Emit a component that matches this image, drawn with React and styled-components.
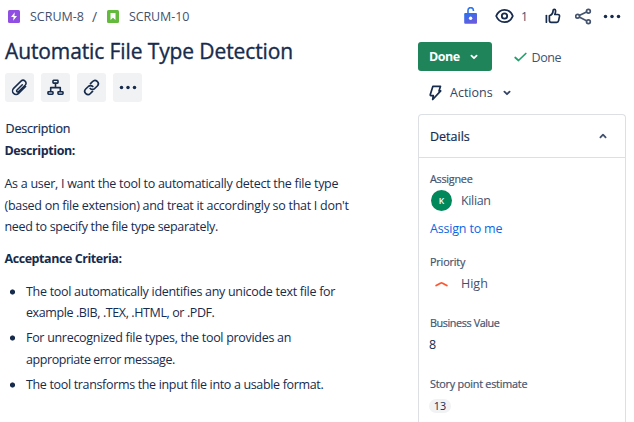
import React from 'react';
import styled, { createGlobalStyle } from 'styled-components';

const navy = '#172b4d';
const slate = '#42526e';

const GlobalStyle = createGlobalStyle`
  body {
    margin: 0;
    background: #fff;
    color: ${navy};
    font-family: "Open Sans", "Noto Sans", sans-serif;
    font-size: 12.5px;
    overflow: hidden;
  }
  svg { display: block; flex: none; }
`;

const Page = styled.div`
  display: grid;
  grid-template-columns: 418px 208px;
  width: 634px;
  height: 422px;
  overflow: hidden;
`;

const Main = styled.main`
  padding-left: 5px;
`;

const Side = styled.aside`
  display: flex;
  flex-direction: column;
`;

const Text = styled.span`
  white-space: nowrap;
  letter-spacing: ${(p) => p.$track || 0}px;
`;

const Breadcrumbs = styled.nav`
  display: flex;
  align-items: center;
  height: 32px;
  padding-left: 3px;
  color: ${slate};
  svg + ${Text} { margin-left: 10px; }
`;

const Slash = styled.span`
  width: 23px;
  padding-left: 8px;
  box-sizing: border-box;
  font-size: 14px;
`;

const Title = styled.h1`
  margin: 0;
  height: 41px;
  line-height: 39px;
  font-size: 21px;
  font-weight: 400;
  -webkit-text-stroke: 0.35px ${navy};
`;

const Toolbar = styled.div`
  display: flex;
  gap: 7px;
`;

const ToolButton = styled.button`
  display: flex;
  align-items: center;
  justify-content: center;
  width: 29px;
  height: 29px;
  padding: 0;
  border: 0;
  border-radius: 3px;
  background: #f1f2f4;
  color: ${navy};
`;

const FieldHeading = styled.h2`
  margin: 16px 0 0 0.5px;
  font-size: 12.5px;
  font-weight: 400;
  line-height: 22px;
  -webkit-text-stroke: 0.2px ${navy};
`;

const Strong = styled.h3`
  margin: 0 0 0 -0.5px;
  font-size: 12.5px;
  font-weight: 700;
  line-height: 22px;
`;

const Paragraph = styled.p`
  display: flex;
  flex-direction: column;
  margin: 11px 0 10px -0.5px;
  line-height: 21.5px;
`;

const List = styled.ul`
  display: flex;
  flex-direction: column;
  gap: 3.6px;
  margin: 11px 0 0;
  padding: 0;
  list-style: none;
  line-height: 21.6px;
`;

const Item = styled.li`
  display: flex;
  flex-direction: column;
  padding-left: 21px;
  background: radial-gradient(circle at 7.5px 11px, ${navy} 2.2px, transparent 2.9px);
`;

const TopActions = styled.div`
  display: flex;
  align-items: center;
  height: 32px;
  padding-left: 46px;
`;

const WatchCount = styled.span`
  width: 31px;
  padding-left: 7px;
  box-sizing: border-box;
  font-size: 12px;
  color: ${slate};
`;

const Gap = styled.span`
  width: ${(p) => p.$w}px;
  flex: none;
`;

const StatusRow = styled.div`
  display: flex;
  align-items: center;
  margin-top: 10px;
  height: 29px;
`;

const StatusButton = styled.button`
  display: flex;
  align-items: center;
  justify-content: space-between;
  width: 74px;
  height: 29px;
  padding: 0 14px 0 11px;
  border: 0;
  border-radius: 3px;
  background: #1f845a;
  color: #fff;
  font: 700 12.5px "Open Sans", sans-serif;
`;

const Resolution = styled.div`
  display: flex;
  align-items: center;
  gap: 4.5px;
  margin: 1px 0 0 22px;
  color: ${slate};
`;

const ActionsRow = styled.div`
  display: flex;
  align-items: center;
  height: 43px;
  padding-left: 11px;
  color: #344563;
`;

const Panel = styled.section`
  flex: 1;
  box-sizing: border-box;
  border: 1px solid #dcdfe4;
  border-bottom: 0;
  border-radius: 4px 4px 0 0;
`;

const PanelHeader = styled.header`
  display: flex;
  align-items: center;
  justify-content: space-between;
  height: 42px;
  padding: 0 18px 0 11px;
  border-bottom: 1px solid #dcdfe4;
  color: ${slate};

  ${Text} {
    color: ${navy};
    -webkit-text-stroke: 0.2px ${navy};
  }
`;

const Fields = styled.div`
  padding: 11px 0 0 11px;
`;

const Field = styled.div`
  height: ${(p) => p.$h}px;
`;

const Label = styled.div`
  height: 20px;
  line-height: 20px;
  font-size: 10.8px;
  color: #44546f;
  -webkit-text-stroke: 0.2px #44546f;
`;

const Value = styled.div`
  display: flex;
  align-items: center;
  height: 23px;
  color: ${slate};
`;

const PlainNumber = styled.span`
  margin-left: -1px;
  color: ${navy};
`;

const Avatar = styled.span`
  display: flex;
  align-items: center;
  justify-content: center;
  width: 21px;
  height: 21px;
  margin: 0 9px 0 1px;
  border-radius: 50%;
  background: #00875a;
  color: #fff;
  font-size: 8.5px;
  font-weight: 600;
`;

const Link = styled.a`
  display: block;
  height: 32px;
  line-height: 33px;
  color: #0c66e4;
`;

const Pill = styled.span`
  margin: 1px 0 0 -1px;
  width: 22px;
  height: 14px;
  line-height: 14px;
  border-radius: 7px;
  background: #f1f2f4;
  text-align: center;
  font-size: 10.8px;
  color: ${navy};
`;

const line = { fill: 'none', stroke: 'currentColor', strokeLinecap: 'round', strokeLinejoin: 'round' };

const EpicIcon = () => (
  <svg width="12" height="13" viewBox="0 0 12 13">
    <rect width="12" height="13" rx="1.5" fill="#904ee2" />
    <path d="M6.8 2.3 3 7h2.6l-.5 3.7L9 6H6.4z" fill="#fff" />
  </svg>
);
const StoryIcon = () => (
  <svg width="12" height="13" viewBox="0 0 12 13">
    <rect width="12" height="13" rx="1.5" fill="#63ba3c" />
    <path d="M3.5 3h5v7L6 7.7 3.5 10z" fill="#fff" />
  </svg>
);
const ClipIcon = () => (
  <svg width="17" height="17" viewBox="0 0 17 17" {...line} strokeWidth="1.5">
    <path d="m11.3 5.8-5.3 5.2a1.1 1.1 0 0 0 1.6 1.6l6.5-6.4A2.9 2.9 0 0 0 10 2.1L2.6 9.4a3.5 3.5 0 0 0 5 5l7-6.9" />
  </svg>
);
const TreeIcon = () => (
  <svg width="17" height="17" viewBox="0 0 17 17" {...line} strokeWidth="1.6">
    <rect x="6" y="1.3" width="5" height="2.8" rx=".6" />
    <rect x="1" y="12.7" width="5" height="2.5" rx=".6" />
    <rect x="11" y="12.7" width="5" height="2.5" rx=".6" />
    <path d="M8.5 4.5v4M3.7 12V8.6h9.6V12" />
  </svg>
);
const LinkIcon = () => (
  <svg width="17" height="17" viewBox="0 0 17 17" {...line} strokeWidth="1.7">
    <path d="M7.5 4.6 9.6 2.5a3.2 3.2 0 0 1 4.7 4.5l-2.6 2.5a3.1 3.1 0 0 1-4.5 0" />
    <path d="M9.5 12.4l-2.1 2.1A3.2 3.2 0 0 1 2.7 10l2.6-2.5a3.1 3.1 0 0 1 4.5 0" />
  </svg>
);
const MoreIcon = () => (
  <svg width="18" height="5" viewBox="0 0 18 5" fill="currentColor">
    <circle cx="2.5" cy="2.5" r="1.75" />
    <circle cx="9" cy="2.5" r="1.75" />
    <circle cx="15.5" cy="2.5" r="1.75" />
  </svg>
);
const LockIcon = () => (
  <svg width="14" height="18" viewBox="0 0 14 18">
    <defs>
      <linearGradient id="lock" x1="0" y1="0" x2=".6" y2="1">
        <stop offset="0" stopColor="#2571ef" />
        <stop offset="1" stopColor="#6c5bdc" />
      </linearGradient>
    </defs>
    <path d="M4 8V3.300a2.700 2.700 0 0 1 5.400 0v.7" fill="none" stroke="#2f76ee" strokeWidth="1.6" />
    <rect x=".2" y="6" width="12.800" height="10.700" rx="1" fill="url(#lock)" />
    <circle cx="6.600" cy="11.300" r="1.700" fill="#fff" />
  </svg>
);
const EyeIcon = () => (
  <svg width="19" height="16" viewBox="0 0 19 16" {...line} strokeWidth="1.8">
    <path d="M1.200 8C2.800 4 5.700 1.800 9.500 1.800S16.200 4 17.800 8c-1.600 4-4.500 6.200-8.300 6.200S2.800 12 1.200 8z" />
    <circle cx="9.500" cy="8" r="2.700" />
  </svg>
);
const ThumbIcon = () => (
  <svg width="16" height="16" viewBox="0 0 16 16" {...line} strokeWidth="1.7">
    <path d="M1.400 7.600v6.600" />
    <path d="M4.400 7.800c2.300-.8 3.600-2.700 3.700-5.200 0-1.700 2.400-1.700 2.500.2 0 1.300-.3 2.500-.8 3.700h3.100c1.200 0 1.800.8 1.600 1.900l-.9 4.300c-.2 1-.9 1.600-1.900 1.600H6.100c-1 0-1.700-.7-1.700-1.700z" />
  </svg>
);
const ShareIcon = () => (
  <svg width="17" height="17" viewBox="0 0 17 17" {...line} strokeWidth="1.7" color="#44546f">
    <circle cx="2.600" cy="8.300" r="1.900" />
    <circle cx="13.400" cy="3.200" r="1.900" />
    <circle cx="13.400" cy="13.700" r="1.900" />
    <path d="m4.700 7.300 6.800-3.300M4.700 9.300l6.800 3.500" />
  </svg>
);
const Chevron = ({ up }) => (
  <svg width="8" height="6" viewBox="0 0 8 6" {...line} strokeWidth="1.8">
    <path d={up ? 'M1.4 4.4 4 1.7l2.6 2.7' : 'M1.4 1.6 4 4.2l2.6-2.6'} />
  </svg>
);
const CheckIcon = () => (
  <svg width="13" height="10" viewBox="0 0 13 10" {...line} strokeWidth="1.7" color="#22a06b">
    <path d="m1.200 5.500 3.300 3 7.300-7" />
  </svg>
);
const BoltIcon = () => (
  <svg width="14" height="16" viewBox="0 0 14 16" {...line} strokeWidth="1.7" color={navy}>
    <path d="M3.900 1.300h7.600l-1.500 4.600h1.700L3.700 14.500l.6-3.900H2q-1-.2-.7-1.200z" />
  </svg>
);
const HighIcon = () => (
  <svg width="13" height="6" viewBox="0 0 13 6" {...line} strokeWidth="1.8" color="#ff5630">
    <path d="m1.200 4.500 4.200-2.300q1.100-.5 2.200 0l4.200 2.300" />
  </svg>
);

const story = [
  ['As a user, I want the tool to automatically detect the file type', -0.28],
  ["(based on file extension) and treat it accordingly so that I don't", -0.28],
  ['need to specify the file type separately.', -0.33],
];
const criteria = [
  [['The tool automatically identifies any unicode text file for', -0.29], ['example .BIB, .TEX, .HTML, or .PDF.', -0.4]],
  [['For unrecognized file types, the tool provides an', -0.3], ['appropriate error message.', -0.43]],
  [['The tool transforms the input file into a usable format.', -0.34]],
];
const renderLine = ([text, track]) => <Text key={text} $track={track}>{text}</Text>;

export default function App() {
  return (
    <Page>
      <GlobalStyle />
      <Main>
        <Breadcrumbs>
          <EpicIcon />
          <Text>SCRUM-8</Text>
          <Slash>/</Slash>
          <StoryIcon />
          <Text $track={-0.1}>SCRUM-10</Text>
        </Breadcrumbs>
        <Title><Text $track={-0.11}>Automatic File Type Detection</Text></Title>
        <Toolbar>
          <ToolButton><ClipIcon /></ToolButton>
          <ToolButton><TreeIcon /></ToolButton>
          <ToolButton><LinkIcon /></ToolButton>
          <ToolButton><MoreIcon /></ToolButton>
        </Toolbar>
        <FieldHeading><Text $track={-0.18}>Description</Text></FieldHeading>
        <Strong><Text $track={-0.42}>Description:</Text></Strong>
        <Paragraph>{story.map(renderLine)}</Paragraph>
        <Strong><Text $track={-0.44}>Acceptance Criteria:</Text></Strong>
        <List>
          {criteria.map((lines, i) => <Item key={i}>{lines.map(renderLine)}</Item>)}
        </List>
      </Main>
      <Side>
        <TopActions>
          <LockIcon />
          <Gap $w={17} />
          <EyeIcon />
          <WatchCount>1</WatchCount>
          <ThumbIcon />
          <Gap $w={14} />
          <ShareIcon />
          <Gap $w={11} />
          <MoreIcon />
        </TopActions>
        <StatusRow>
          <StatusButton><Text $track={-0.5}>Done</Text><Chevron /></StatusButton>
          <Resolution><CheckIcon /><Text $track={-0.4}>Done</Text></Resolution>
        </StatusRow>
        <ActionsRow>
          <BoltIcon />
          <Gap $w={7} />
          <Text>Actions</Text>
          <Gap $w={10} />
          <Chevron />
        </ActionsRow>
        <Panel>
          <PanelHeader><Text>Details</Text><Chevron up /></PanelHeader>
          <Fields>
            <Field $h={83}>
              <Label><Text $track={-0.25}>Assignee</Text></Label>
              <Value><Avatar>K</Avatar><Text $track={-0.35}>Kilian</Text></Value>
              <Link><Text $track={-0.18}>Assign to me</Text></Link>
            </Field>
            <Field $h={61}>
              <Label><Text $track={-0.15}>Priority</Text></Label>
              <Value><Gap $w={5} /><HighIcon /><Gap $w={13} /><Text>High</Text></Value>
            </Field>
            <Field $h={61}>
              <Label><Text $track={-0.4}>Business Value</Text></Label>
              <Value><PlainNumber>8</PlainNumber></Value>
            </Field>
            <Field $h={61}>
              <Label><Text $track={-0.22}>Story point estimate</Text></Label>
              <Value><Pill>13</Pill></Value>
            </Field>
          </Fields>
        </Panel>
      </Side>
    </Page>
  );
}
